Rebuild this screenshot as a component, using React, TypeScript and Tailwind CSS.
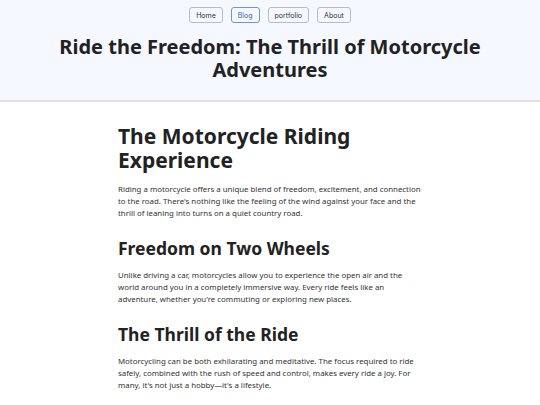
const NAV = ["Home", "Blog", "portfolio", "About"];

const SECTIONS = [
  {
    title: "Freedom on Two Wheels",
    text: "Unlike driving a car, motorcycles allow you to experience the open air and the world around you in a completely immersive way. Every ride feels like an adventure, whether you're commuting or exploring new places.",
  },
  {
    title: "The Thrill of the Ride",
    text: "Motorcycling can be both exhilarating and meditative. The focus required to ride safely, combined with the rush of speed and control, makes every ride a joy. For many, it's not just a hobby\u2014it's a lifestyle.",
  },
];

export default function App() {
  return (
    <div className="min-h-[405px] bg-white text-[#222] font-['Noto_Sans',sans-serif]">
      <header className="bg-[#f5f8ff] border-b-2 border-[#dfe2e8] pt-[7px] pb-[19px]">
        <nav className="flex justify-center gap-[8px] font-['Inter',sans-serif]">
          {NAV.map((item) => (
            <button
              key={item}
              className={`h-[16px] px-[6px] rounded-[3px] border text-[7px] leading-none bg-transparent ${
                item === "Blog" ? "border-[#7b93c4] text-[#3b63b5]" : "border-[#b8bcc4] text-[#333]"
              }`}
            >
              {item}
            </button>
          ))}
        </nav>
        <h1 className="mt-[12px] text-center text-[20px] leading-[23px] font-bold text-[#222]">
          Ride the Freedom: The Thrill of Motorcycle
          <br />
          Adventures
        </h1>
      </header>

      <main className="max-w-[304px] mx-auto pt-[22px] pb-[20px]">
        <h2 className="text-[21px] leading-[24px] font-bold text-[#222]">
          The Motorcycle Riding Experience
        </h2>
        <p className="mt-[11px] text-[7.85px] leading-[12px] text-[#333]">
          Riding a motorcycle offers a unique blend of freedom, excitement, and connection to the road. There's nothing like the feeling of the wind against your face and the thrill of leaning into turns on a quiet country road.
        </p>
        {SECTIONS.map((s) => (
          <section key={s.title}>
            <h3 className="mt-[17px] text-[17.5px] leading-[24px] font-bold text-[#222]">{s.title}</h3>
            <p className="mt-[9px] text-[7.85px] leading-[12px] text-[#333]">{s.text}</p>
          </section>
        ))}
      </main>
    </div>
  );
}
